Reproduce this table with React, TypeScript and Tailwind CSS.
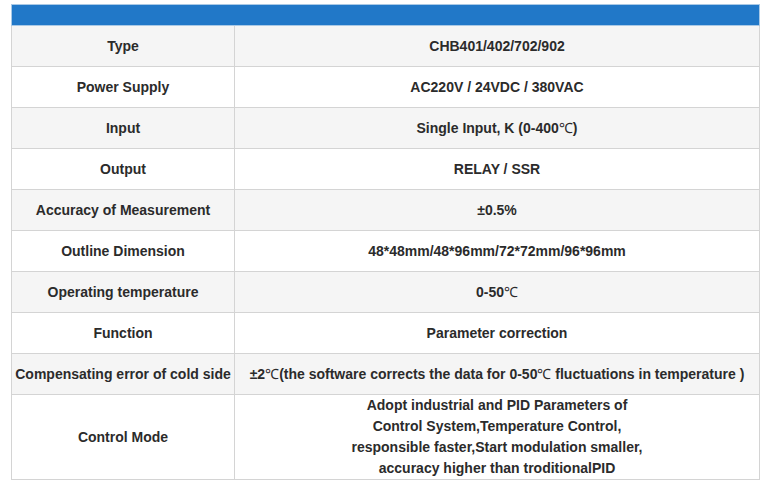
import React from 'react';

const rows: { label: string; value: React.ReactNode }[] = [
  { label: 'Type', value: 'CHB401/402/702/902' },
  { label: 'Power Supply', value: 'AC220V / 24VDC / 380VAC' },
  { label: 'Input', value: <>Single Input, K (0-400<span className="font-normal font-['Liberation_Serif',serif]">℃</span>)</> },
  { label: 'Output', value: 'RELAY / SSR' },
  { label: 'Accuracy of Measurement', value: '±0.5%' },
  { label: 'Outline Dimension', value: '48*48mm/48*96mm/72*72mm/96*96mm' },
  { label: 'Operating temperature', value: <>0-50<span className="font-normal font-['Liberation_Serif',serif]">℃</span></> },
  { label: 'Function', value: 'Parameter correction' },
  {
    label: 'Compensating error of cold side',
    value: (
      <>
        ±2<span className="font-normal font-['Liberation_Serif',serif]">℃</span>(the software corrects the data for 0-50
        <span className="font-normal font-['Liberation_Serif',serif]">℃</span> fluctuations in temperature )
      </>
    ),
  },
  {
    label: 'Control Mode',
    value: (
      <>
        Adopt industrial and PID Parameters of
        <br />
        Control System,Temperature Control,
        <br />
        responsible faster,Start modulation smaller,
        <br />
        accuracy higher than troditionalPID
      </>
    ),
  },
];

const App: React.FC = () => {
  return (
    <div className="w-[776px] h-[496px] bg-white pt-[4px] pl-[11px] font-['Liberation_Sans',Arial,sans-serif] text-[14px] font-bold text-[#2b2b2b]">
      <table className="w-[749px] border-collapse table-fixed">
        <colgroup>
          <col className="w-[223px]" />
          <col />
        </colgroup>
        <tbody>
          <tr>
            <td colSpan={2} className="h-[21px] bg-[#2178c8] border border-[#a9c9e6] p-0"></td>
          </tr>
          {rows.map((row, i) => (
            <tr key={row.label} className={i % 2 === 0 ? 'bg-[#f5f5f5]' : 'bg-white'}>
              <td className={`border border-[#d4d4d4] text-center p-0 ${i === rows.length - 1 ? 'h-[85px]' : 'h-[41px]'}`}>
                {row.label}
              </td>
              <td className={`border border-[#d4d4d4] text-center p-0 ${i === rows.length - 1 ? 'leading-[21px]' : ''}`}>
                {row.value}
              </td>
            </tr>
          ))}
        </tbody>
      </table>
    </div>
  );
};

export default App;
